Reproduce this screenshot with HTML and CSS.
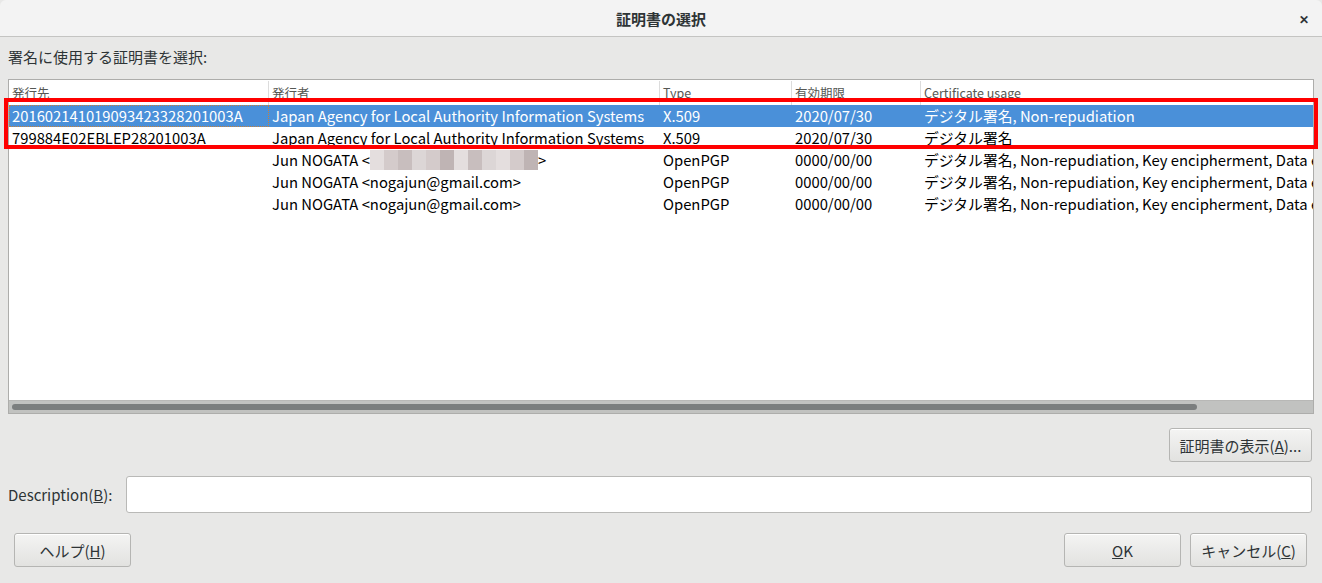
FILE: index.html
```html
<!DOCTYPE html>
<html lang="ja">
<head>
    <meta charset="UTF-8">
    <title>証明書の選択</title>
    <link rel="stylesheet" href="styles.css">
</head>
<body>
    <div class="titlebar">
        <span></span>
        <div class="title">証明書の選択</div>
        <div class="close">&#x2715;</div>
    </div>

    <div class="dialog">
        <div class="prompt">署名に使用する証明書を選択:</div>

        <div class="list">
            <div class="list-inner">
                <div class="row head">
                    <div class="cell">発行先</div>
                    <div class="cell">発行者</div>
                    <div class="cell">Type</div>
                    <div class="cell">有効期限</div>
                    <div class="cell">Certificate usage</div>
                </div>
                <div class="row selected">
                    <div class="cell focus">201602141019093423328201003A</div>
                    <div class="cell">Japan Agency for Local Authority Information Systems</div>
                    <div class="cell">X.509</div>
                    <div class="cell">2020/07/30</div>
                    <div class="cell">デジタル署名, Non-repudiation</div>
                </div>
                <div class="row">
                    <div class="cell">799884E02EBLEP28201003A</div>
                    <div class="cell">Japan Agency for Local Authority Information Systems</div>
                    <div class="cell">X.509</div>
                    <div class="cell">2020/07/30</div>
                    <div class="cell">デジタル署名</div>
                </div>
                <div class="row">
                    <div class="cell"></div>
                    <div class="cell">Jun NOGATA &lt;<span class="blur"><i class="b1"></i><i class="b2"></i><i class="b3"></i><i class="b4"></i><i class="b2"></i><i class="b5"></i><i class="b1"></i><i class="b3"></i><i class="b4"></i><i class="b1"></i><i class="b2"></i><i class="b5"></i></span>&gt;</div>
                    <div class="cell">OpenPGP</div>
                    <div class="cell">0000/00/00</div>
                    <div class="cell">デジタル署名, Non-repudiation, Key encipherment, Data encipherment</div>
                </div>
                <div class="row">
                    <div class="cell"></div>
                    <div class="cell">Jun NOGATA &lt;nogajun@gmail.com&gt;</div>
                    <div class="cell">OpenPGP</div>
                    <div class="cell">0000/00/00</div>
                    <div class="cell">デジタル署名, Non-repudiation, Key encipherment, Data encipherment</div>
                </div>
                <div class="row">
                    <div class="cell"></div>
                    <div class="cell">Jun NOGATA &lt;nogajun@gmail.com&gt;</div>
                    <div class="cell">OpenPGP</div>
                    <div class="cell">0000/00/00</div>
                    <div class="cell">デジタル署名, Non-repudiation, Key encipherment, Data encipherment</div>
                </div>
            </div>
            <div class="hscroll"><div class="thumb"></div></div>
        </div>

        <div class="view-row">
            <button class="btn view">証明書の表示(<u>A</u>)...</button>
        </div>

        <div class="desc-row">
            <label class="desc-label">Description(<u>B</u>):</label>
            <div class="desc-input"></div>
        </div>

        <div class="actions">
            <button class="btn">ヘルプ(<u>H</u>)</button>
            <div class="spacer"></div>
            <button class="btn"><u>O</u>K</button>
            <button class="btn">キャンセル(<u>C</u>)</button>
        </div>
    </div>

    <div class="mark"></div>
</body>
</html>
```

FILE: styles.css
```css
* {
    box-sizing: border-box;
    margin: 0;
    padding: 0;
}

body {
    width: 1322px;
    height: 583px;
    overflow: hidden;
    background-color: #e8e8e7;
    color: #2e3436;
    font-family: "Noto Sans CJK JP", "Noto Sans", sans-serif;
    font-size: 15px;
    position: relative;
}

.titlebar {
    height: 37px;
    display: grid;
    grid-template-columns: 1fr auto 1fr;
    align-items: center;
    background-color: #f3f3f3;
    border-bottom: 1px solid #c4c4c2;
    border-radius: 6px 6px 0 0;
}

.title {
    font-weight: bold;
    font-size: 15px;
    color: #2e3436;
}

.close {
    justify-self: end;
    margin-right: 13px;
    font-size: 12px;
    font-weight: bold;
    color: #2e3436;
}

.dialog {
    padding: 0 8px;
}

.prompt {
    height: 20px;
    line-height: 20px;
    margin-top: 10px;
    color: #2e3436;
}

.list {
    margin-top: 12px;
    height: 335px;
    border: 1px solid #adadab;
    background-color: #fff;
    display: flex;
    flex-direction: column;
}

.list-inner {
    flex: 1;
    overflow: hidden;
}

.row {
    display: grid;
    grid-template-columns: 260px 391px 132px 129px 1fr;
    height: 22px;
    line-height: 22px;
    font-size: 14.8px;
    color: #000;
    white-space: nowrap;
}

.row .cell {
    overflow: hidden;
    padding-left: 3px;
}

.row.head {
    height: 25px;
    line-height: 24px;
    font-size: 12.5px;
    color: #555753;
    padding-top: 1px;
}

.row.head .cell {
    border-right: 1px solid #dcdcdc;
}

.row.head .cell:last-child {
    border-right: none;
}

.row.selected {
    background-color: #4a90d9;
    color: #fff;
}

.row .focus {
    border: 1px dotted #c9813a;
    line-height: 20px;
    padding-left: 2px;
}

.blur {
    display: inline-flex;
    vertical-align: middle;
    height: 20px;
    margin-top: -3px;
}

.blur i {
    width: 14px;
    height: 20px;
}

.b1 { background-color: #e4dede; }
.b2 { background-color: #d4cbcb; }
.b3 { background-color: #c8bebe; }
.b4 { background-color: #dcd6d6; }
.b5 { background-color: #bfb4b4; }

.hscroll {
    height: 13px;
    background-color: #c1c2c0;
    border-top: 1px solid #b8b8b6;
    padding: 3px 3px 0;
}

.thumb {
    width: 1185px;
    height: 6px;
    border-radius: 3px;
    background-color: #7b7e7e;
}

.btn {
    height: 34px;
    font-family: inherit;
    font-size: 15px;
    color: #2e3436;
    background: linear-gradient(#f4f4f3, #e2e2e0);
    border: 1px solid #b5b5b3;
    border-radius: 3px;
    box-shadow: inset 0 1px #fff;
}

.view-row {
    display: flex;
    justify-content: flex-end;
    margin-top: 14px;
    padding-right: 2px;
}

.btn.view {
    width: 143px;
}

.desc-row {
    display: flex;
    align-items: center;
    margin-top: 14px;
    padding-right: 2px;
}

.desc-label {
    width: 118px;
    color: #2e3436;
}

.desc-input {
    flex: 1;
    height: 37px;
    background-color: #fff;
    border: 1px solid #b9b9b7;
    border-radius: 3px;
}

.actions {
    display: flex;
    gap: 9px;
    margin-top: 20px;
    padding: 0 7px 0 6px;
}

.actions .btn {
    width: 117px;
}

.spacer {
    flex: 1;
}

/* 注目用の赤枠 */
.mark {
    position: absolute;
    left: 4px;
    top: 98px;
    width: 1314px;
    height: 51px;
    border: 4px solid #f00;
    pointer-events: none;
}
```
